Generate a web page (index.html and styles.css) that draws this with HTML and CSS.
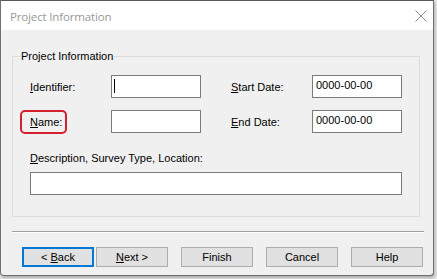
FILE: index.html
```html
<!DOCTYPE html>
<html>
<head>
<meta charset="utf-8">
<link rel="stylesheet" href="styles.css">
</head>
<body>
<div class="window">
  <div class="titlebar">
    <span class="title">Project Information</span>
    <svg class="close" width="12" height="12" viewBox="0 0 12 12"><path d="M0.5 0.5 L11.5 11.5 M11.5 0.5 L0.5 11.5" stroke="#8a8a8a" stroke-width="1" fill="none"/></svg>
  </div>
  <div class="client">
    <div class="group">
      <div class="legend">Project Information</div>
      <div class="row row1">
        <label class="lbl"><u>I</u>dentifier:</label>
        <div class="input"><span class="caret"></span></div>
        <label class="lbl lbl-right"><u>S</u>tart Date:</label>
        <div class="input"><span class="val">0000-00-00</span></div>
      </div>
      <div class="row row2">
        <label class="lbl name-lbl"><u>N</u>ame:<span class="mark"></span></label>
        <div class="input"></div>
        <label class="lbl lbl-right"><u>E</u>nd Date:</label>
        <div class="input"><span class="val">0000-00-00</span></div>
      </div>
      <div class="desc-lbl"><u>D</u>escription, Survey Type, Location:</div>
      <div class="input wide"></div>
    </div>
    <div class="sep"></div>
    <div class="buttons">
      <button class="btn default">&lt; <u>B</u>ack</button>
      <button class="btn next"><u>N</u>ext &gt;</button>
      <button class="btn gap">Finish</button>
      <button class="btn gap">Cancel</button>
      <button class="btn gap">Help</button>
    </div>
  </div>
</div>
</body>
</html>
```

FILE: styles.css
```css
html, body {
  margin: 0;
  padding: 0;
}
body {
  width: 437px;
  height: 279px;
  background: #e6e6e6;
  overflow: hidden;
  font-family: "Liberation Sans", Arial, sans-serif;
  font-size: 11px;
  color: #000;
}
.window {
  width: 432px;
  height: 274px;
  border: 1px solid #707070;
  border-top-color: #5a5a5a;
  background: #f0f0f0;
  box-shadow: 1px 2px 3px rgba(0,0,0,0.25);
  border-radius: 0 0 4px 4px;
  overflow: hidden;
}
.titlebar {
  height: 29px;
  background: #fff;
  display: flex;
  align-items: center;
  justify-content: space-between;
  padding: 0 6px 0 9px;
}
.title {
  font-family: "Open Sans", "Noto Sans", sans-serif;
  font-size: 11.5px;
  color: #999;
  letter-spacing: -0.15px;
  margin-top: 2px;
}
.close {
  margin-top: 1px;
}
.client {
  padding-top: 26px;
}
.group {
  margin-left: 11px;
  width: 406px;
  height: 159px;
  border: 1px solid #dcdcdc;
}
.legend {
  width: fit-content;
  margin: -7px 0 0 7px;
  padding: 0 1px;
  height: 13px;
  line-height: 13px;
  background: #f0f0f0;
}
.row {
  display: flex;
  align-items: center;
  padding-left: 17px;
  height: 23px;
}
.row1 { margin-top: 12px; }
.row2 { margin-top: 12px; }
.lbl {
  width: 81px;
  position: relative;
}
.lbl-right {
  margin-left: 30px;
}
.input {
  width: 88px;
  height: 21px;
  border: 1px solid #7a7a7a;
  background: #fff;
  position: relative;
}
.val {
  display: block;
  padding: 3px 0 0 3px;
  line-height: 13px;
}
.caret {
  display: block;
  width: 1px;
  height: 14px;
  margin: 3px 0 0 2px;
  background: #000;
}
.mark {
  position: absolute;
  left: -10px;
  top: -6px;
  width: 43px;
  height: 20px;
  border: 2px solid #d4202e;
  border-radius: 5px;
}
.desc-lbl {
  margin: 19px 0 0 17px;
  line-height: 13px;
}
.input.wide {
  width: 370px;
  margin: 7px 0 0 17px;
}
.sep {
  margin: 14px 0 0 11px;
  width: 412px;
  height: 1px;
  background: #a0a0a0;
  border-bottom: 1px solid #fff;
}
.buttons {
  display: flex;
  margin: 14px 0 0 21px;
}
.btn {
  width: 72px;
  height: 20px;
  padding: 0;
  border: 1px solid #adadad;
  background: #e1e1e1;
  font-family: "Liberation Sans", Arial, sans-serif;
  font-size: 11px;
  color: #000;
}
.btn.default {
  border: 2px solid #0078d7;
}
.btn.next { margin-left: 2px; }
.btn.gap { margin-left: 13px; }
```
